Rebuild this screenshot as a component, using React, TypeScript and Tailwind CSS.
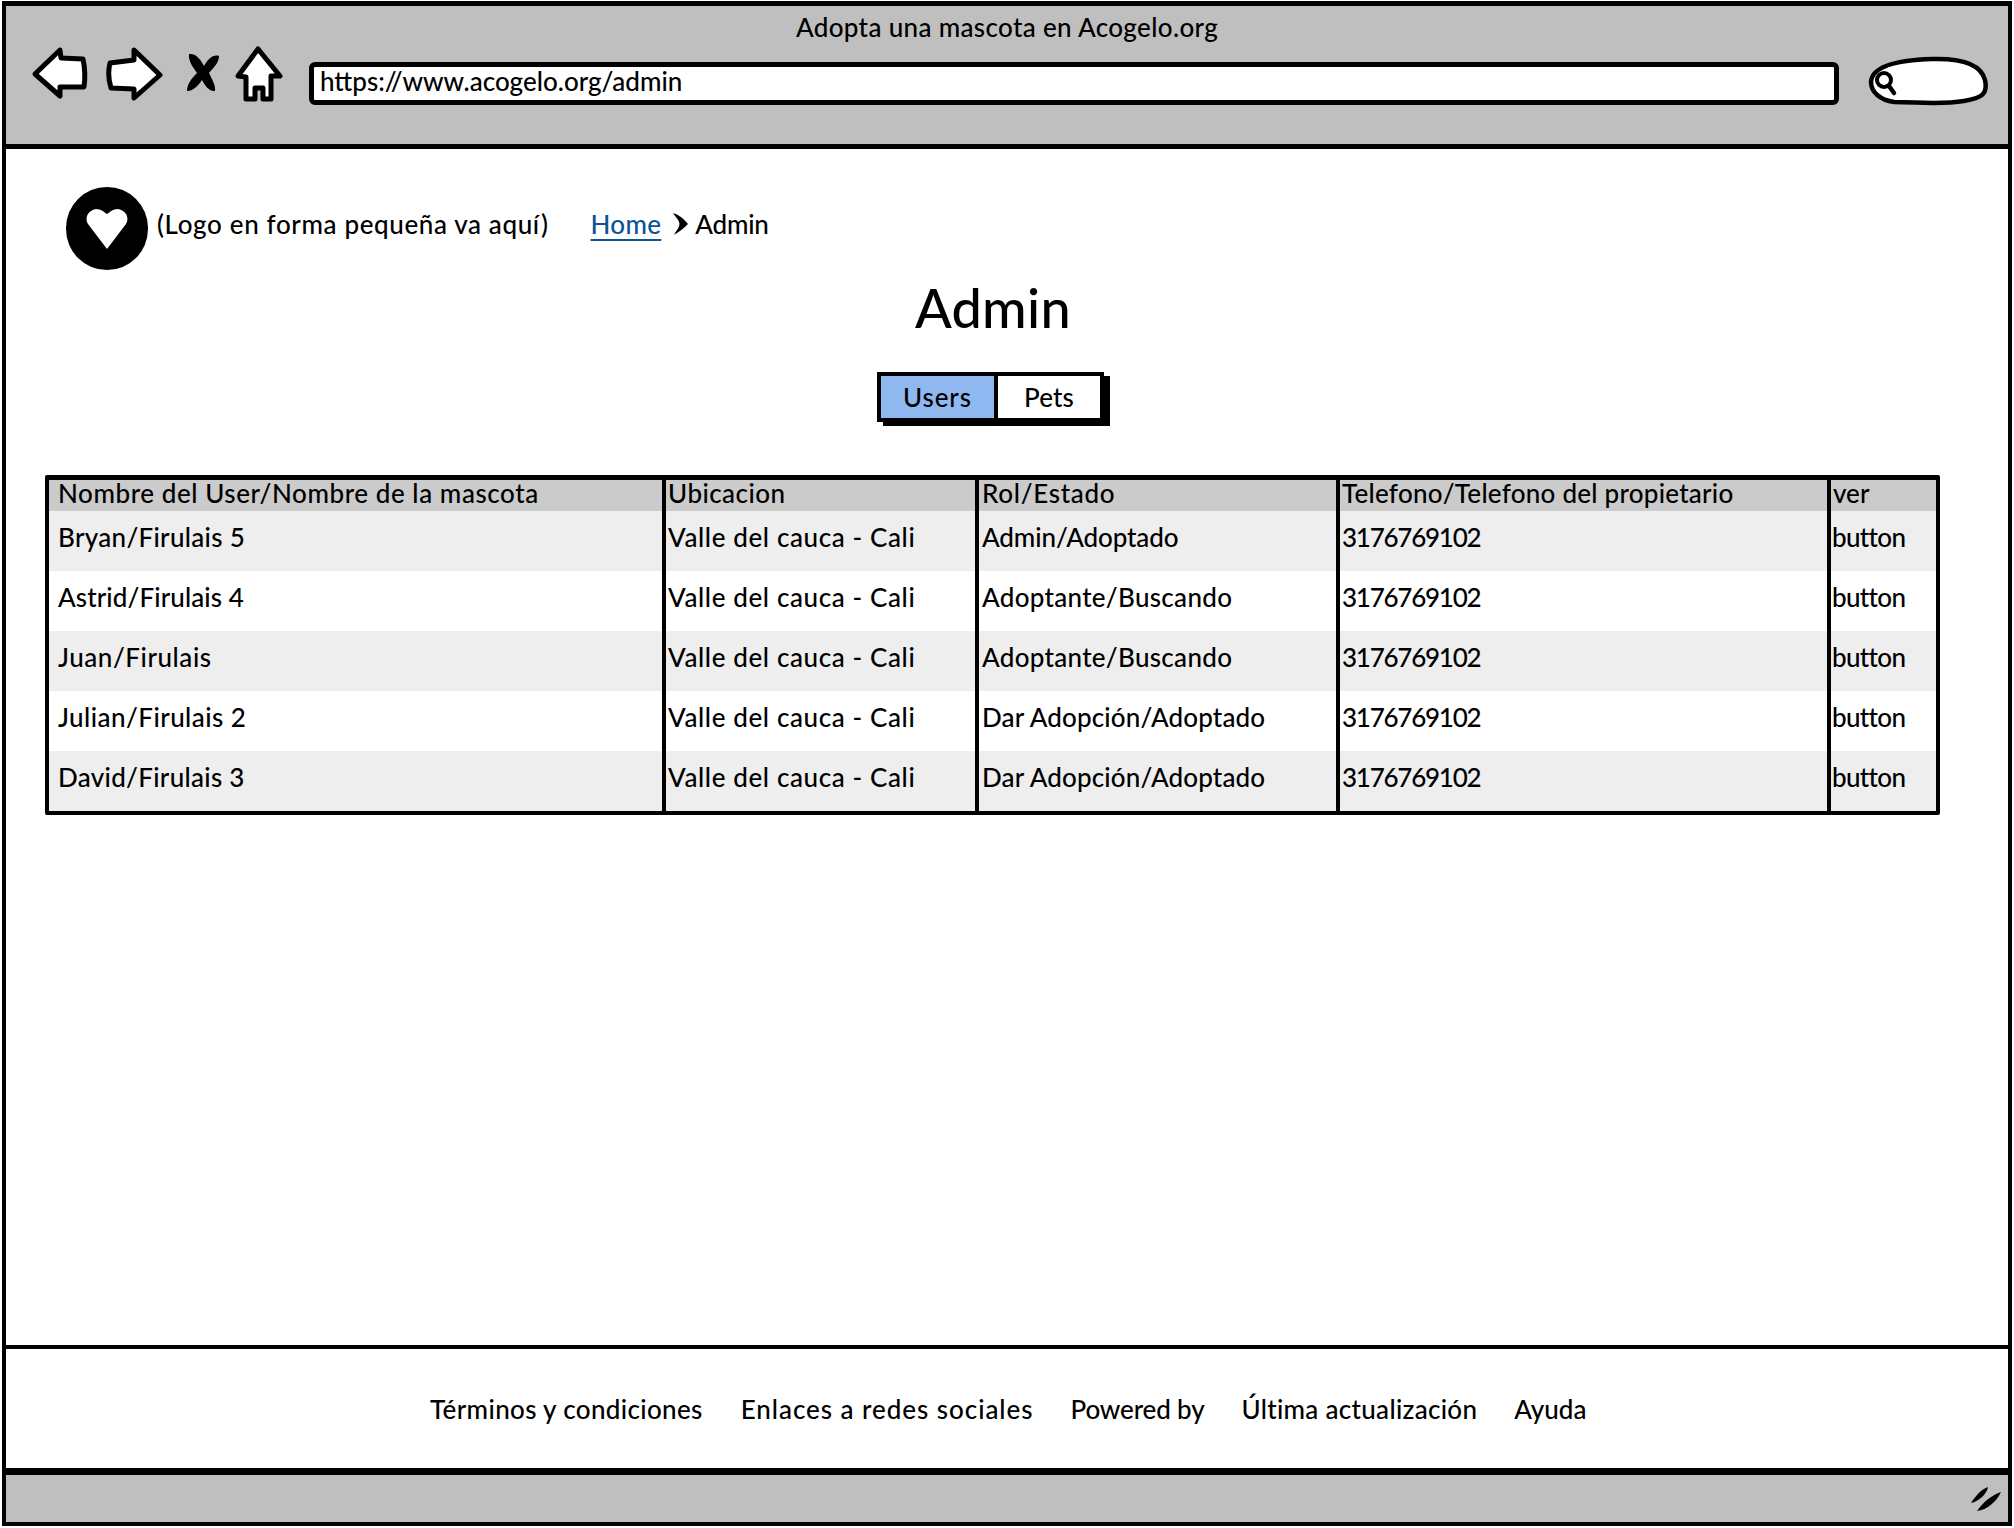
const rows = [
  { name: "Bryan/Firulais 5", nameCls: "tracking-[0.3px]", rol: "Admin/Adoptado", rolCls: "tracking-[-0.1px]" },
  { name: "Astrid/Firulais 4", nameCls: "tracking-[0.1px]", rol: "Adoptante/Buscando", rolCls: "tracking-[0.3px]" },
  { name: "Juan/Firulais", nameCls: "tracking-[0.55px]", rol: "Adoptante/Buscando", rolCls: "tracking-[0.3px]" },
  { name: "Julian/Firulais 2", nameCls: "tracking-[0.45px]", rol: "Dar Adopción/Adoptado", rolCls: "tracking-[0.15px]" },
  { name: "David/Firulais 3", nameCls: "tracking-[0.3px]", rol: "Dar Adopción/Adoptado", rolCls: "tracking-[0.15px]" },
];

const gridCols = "grid grid-cols-[617px_313px_361px_491px_105px]";

function Back() {
  return (
    <svg width="60" height="54" viewBox="0 0 60 54" className="shrink-0 mt-[1px]">
      <path d="M29 3 L4 27 L29 49 L29 40 L53 40 Q55 26 52 12 L30 11 Z" fill="#fff" stroke="#000" strokeWidth="5" strokeLinejoin="round" />
    </svg>
  );
}
function Forward() {
  return (
    <svg width="60" height="54" viewBox="0 0 60 54" className="shrink-0 mt-[1px]">
      <path d="M29 3 L55 28 L29 51 L29 42 L6 41 Q2 28 5 16 L29 13 Z" fill="#fff" stroke="#000" strokeWidth="5" strokeLinejoin="round" />
    </svg>
  );
}
function Close() {
  return (
    <svg width="34" height="40" viewBox="0 0 34 40" className="shrink-0 mt-[7px]">
      <path d="M3 1 C10 0 15 7 18 13 C22 6 27 1 33 3 C33 10 27 15 23 20 C26 26 30 33 29 38 C24 39 19 33 16 27 C12 33 7 38 1 38 C1 31 6 25 11 20 C7 14 2 8 3 1 Z" fill="#000" />
    </svg>
  );
}
function House() {
  return (
    <svg width="48" height="56" viewBox="0 0 48 56" className="shrink-0 ml-[1px]">
      <path d="M23 3 L45 30 L36 30 L36 53 L28 53 L28 42 L20 42 L20 53 L11 53 L11 31 L3 30 Z" fill="#fff" stroke="#000" strokeWidth="5" strokeLinejoin="round" />
    </svg>
  );
}
function SearchPill() {
  return (
    <svg width="122" height="52" viewBox="0 0 122 52" className="shrink-0 mt-[10px]">
      <path d="M3 26 C4 10 30 4 64 3 C95 2 113 8 117 24 C120 38 114 42 96 45 C72 49 50 46 26 46 C12 44 3 36 3 26 Z" fill="#fff" stroke="#000" strokeWidth="4.5" />
      <circle cx="16" cy="24" r="7" fill="none" stroke="#000" strokeWidth="4" />
      <path d="M21 30 L26 37" stroke="#000" strokeWidth="4.5" strokeLinecap="round" />
    </svg>
  );
}
function Grip() {
  return (
    <svg width="32" height="26" viewBox="0 0 32 26" className="shrink-0">
      <path d="M1 17 C6 9 12 3 18 1 C17 8 8 16 1 17 Z" fill="#000" />
      <path d="M7 25 C13 16 22 9 31 6 C27 15 17 24 7 25 Z" fill="#000" />
    </svg>
  );
}
function Heart() {
  return (
    <svg width="42" height="40" viewBox="0 0 42 40">
      <path d="M21 40 L2 15 C-2 8 3 1 10 0 C15 0 18 3 21 5 C24 3 27 0 32 0 C39 1 44 8 40 15 Z" fill="#fff" />
    </svg>
  );
}
function Chevron() {
  return (
    <svg width="15" height="22" viewBox="0 0 14 20" className="shrink-0">
      <path d="M0 0 C5 1 10 5 14 10 C10 14 5 18 1 20 C4 15 6 13 6 10 C6 7 3 4 0 0 Z" fill="#000" />
    </svg>
  );
}

export default function App() {
  return (
    <div className="w-[2014px] h-[1528px] bg-white pt-[1px] px-[2px] pb-[2px] text-black font-['Lato','Liberation_Sans',sans-serif] font-medium text-[26px] leading-none">
      <div className="w-full h-full border-[4px] border-t-[5px] border-black flex flex-col">
        <header className="h-[143px] shrink-0 bg-[#bfbfbf] border-b-[5px] border-black flex flex-col">
          <div className="h-[40px] pt-[8px] flex justify-center shrink-0">
            <span className="tracking-[0.35px]">Adopta una mascota en Acogelo.org</span>
          </div>
          <div className="flex items-start pl-[25px] pr-[18px]">
            <Back />
            <div className="w-[14px] shrink-0" />
            <Forward />
            <div className="w-[21px] shrink-0" />
            <Close />
            <div className="w-[14px] shrink-0" />
            <House />
            <div className="w-[26px] shrink-0" />
            <div className="flex-1 h-[43px] mt-[16px] bg-white border-[5px] border-black rounded-[6px] flex items-center pl-[6px] pb-[6px]">
              <span className="tracking-[0px]">https://www.acogelo.org/admin</span>
            </div>
            <div className="w-[29px] shrink-0" />
            <SearchPill />
          </div>
        </header>

        <main className="flex-1 flex flex-col">
          <div className="flex items-center pl-[60px] pt-[38px]">
            <div className="w-[82px] h-[83px] rounded-full bg-black flex items-center justify-center shrink-0">
              <Heart />
            </div>
            <div className="flex items-center pb-[10px]">
              <span className="ml-[9px] tracking-[0.63px]">(Logo en forma pequeña va aquí)</span>
              <a className="ml-[42px] tracking-[0.3px] text-[#0b5394] underline underline-offset-[5px]">Home</a>
              <span className="ml-[12px]"><Chevron /></span>
              <span className="ml-[7px] tracking-[-0.2px]">Admin</span>
            </div>
          </div>

          <h1 className="text-center text-[54px] leading-none font-medium mt-[11px] pr-[28px] tracking-[0.3px]">Admin</h1>

          <div className="flex mt-[37px] ml-[871px]">
            <div className="flex h-[50px] border-[4px] border-black shadow-[6px_4px_0_0_#000] bg-white">
              <div className="w-[117px] bg-[#8fb8f0] border-r-[4px] border-black flex items-center justify-center tracking-[0.9px] pb-[1px]">Users</div>
              <div className="w-[102px] flex items-center justify-center tracking-[0.2px] pb-[1px]">Pets</div>
            </div>
          </div>

          <div className="ml-[39px] mt-[53px] w-[1895px] border-[4px] border-t-[5px] border-black rounded-[2px]">
            <div className={`${gridCols} h-[31px] bg-[#cbcbcb] items-stretch`}>
              <div className="pl-[9px] pb-[6px] border-r-[4px] border-black flex items-center tracking-[0.57px]">Nombre del User/Nombre de la mascota</div>
              <div className="pl-[2px] pb-[6px] border-r-[4px] border-black flex items-center tracking-[0.45px]">Ubicacion</div>
              <div className="pl-[3px] pb-[6px] border-r-[4px] border-black flex items-center tracking-[0.7px]">Rol/Estado</div>
              <div className="pl-[2px] pb-[6px] border-r-[4px] border-black flex items-center tracking-[0.25px]">Telefono/Telefono del propietario</div>
              <div className="pl-[2px] pb-[6px] flex items-center">ver</div>
            </div>
            {rows.map((r, i) => (
              <div key={i} className={`${gridCols} h-[60px] ${i % 2 === 0 ? "bg-[#eeeeee]" : "bg-white"}`}>
                <div className={`pl-[9px] pb-[8px] border-r-[4px] border-black flex items-center ${r.nameCls}`}>{r.name}</div>
                <div className="pl-[2px] pb-[8px] border-r-[4px] border-black flex items-center tracking-[0.62px]">Valle del cauca - Cali</div>
                <div className={`pl-[3px] pb-[8px] border-r-[4px] border-black flex items-center ${r.rolCls}`}>{r.rol}</div>
                <div className="pl-[2px] pb-[8px] border-r-[4px] border-black flex items-center tracking-[-1.25px]">3176769102</div>
                <div className="pl-[1px] pb-[8px] flex items-center tracking-[-0.65px]">button</div>
              </div>
            ))}
          </div>
        </main>

        <footer className="h-[130px] shrink-0 border-t-[4px] border-b-[7px] border-black flex items-center pl-[424px]">
          <span className="tracking-[0.35px]">Términos y condiciones</span>
          <span className="ml-[38px] tracking-[0.95px]">Enlaces a redes sociales</span>
          <span className="ml-[37px] tracking-[-0.15px]">Powered by</span>
          <span className="ml-[37px] tracking-[0.3px]">Última actualización</span>
          <span className="ml-[37px]">Ayuda</span>
        </footer>

        <div className="h-[47px] shrink-0 bg-[#bfbfbf] flex items-center justify-end pr-[6px]">
          <Grip />
        </div>
      </div>
    </div>
  );
}
